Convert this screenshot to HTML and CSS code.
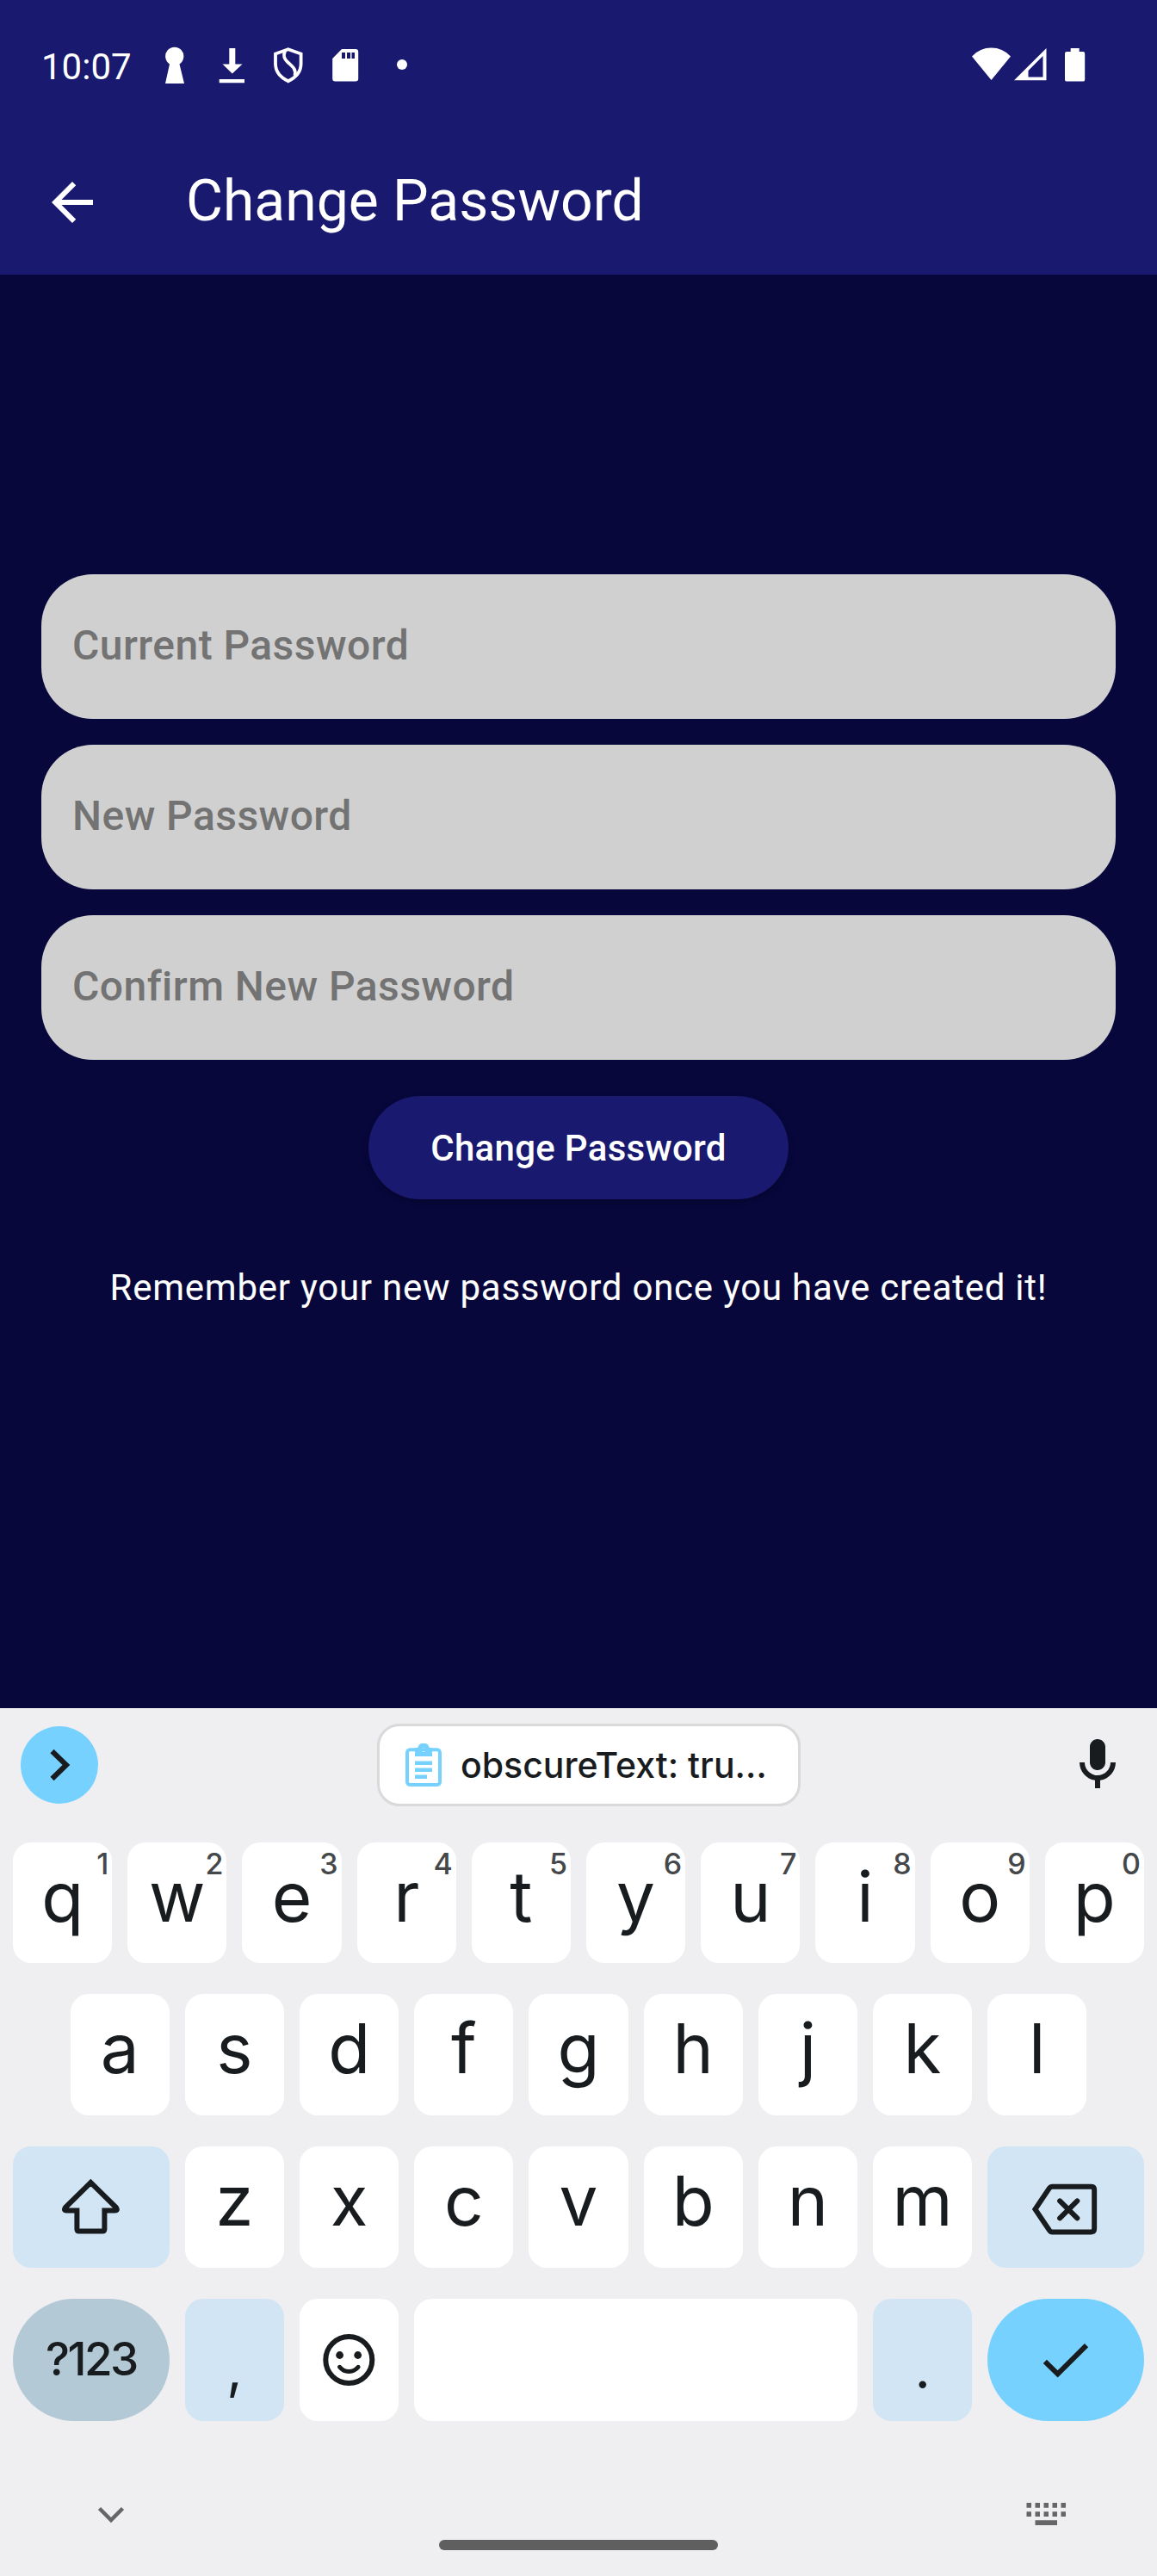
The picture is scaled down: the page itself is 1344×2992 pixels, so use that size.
FILE: index.html
```html
<!DOCTYPE html>
<html lang="en">
<head>
<meta charset="utf-8">
<title>Change Password</title>
<link rel="stylesheet" href="styles.css">
</head>
<body>
<div class="screen">
  <header class="top">
    <div class="status">
      <span class="time">10:07</span>
      <svg class="notifications" width="288" height="48" viewBox="188 51 288 48" fill="#fff">
        <path d="M197 74.500A10.600 10.800 0 1 1 208.500 74.500L214 97H192z"/>
        <path d="M266.300 56h7v18.500h8.200L269.800 85.500 258.500 74.500h7.800zM254.700 92H284v4.200h-29.300z"/>
        <path d="M334.800 57.200L349.600 62.500V74c0 9-6 16-14.800 20.300C326 90 320 83 320 74V62.500z" fill="none" stroke="#fff" stroke-width="3.800"/>
        <path d="M331 59.500c-2.500 6-.5 9.500 3.500 13 5 4.500 10 8 8 15.500" fill="none" stroke="#fff" stroke-width="3.800"/>
        <path fill-rule="evenodd" d="M397 57h16q3.200 0 3.200 3.200v31q0 3.300-3.200 3.300h-23.600q-3.200 0-3.200-3.300V68zM397 61v7h4v-7zM403 61v7h4v-7zM408.500 61v7h3.500v-7z"/>
        <circle cx="467" cy="75" r="6"/>
      </svg>
      <svg class="system" width="134" height="42" viewBox="1128 54 134 42" fill="#fff">
        <path d="M1129 65.500Q1138.500 55.600 1151.500 55.600T1174 65.500L1151.500 93z"/>
        <path fill-rule="evenodd" d="M1178 93.300L1215.500 56V93.300zM1194.500 82V89.500H1211.500V65z"/>
        <path d="M1243.700 56h10v4h4.300q2.200 0 2.200 2.200v30.200q0 2.200-2.200 2.200h-18.800q-2.200 0-2.200-2.200V62.200q0-2.200 2.200-2.200h4.500z"/>
      </svg>
    </div>
    <div class="appbar">
      <svg class="back" width="72" height="72" viewBox="0 0 24 24" fill="#fff"><path d="M20 11H7.830l5.590-5.590L12 4l-8 8 8 8 1.410-1.410L7.830 13H20z"/></svg>
      <h1 class="title">Change Password</h1>
    </div>
  </header>

  <main class="form">
    <div class="field">Current Password</div>
    <div class="field">New Password</div>
    <div class="field">Confirm New Password</div>
    <button class="submit">Change Password</button>
    <p class="note">Remember your new password once you have created it!</p>
  </main>

  <section class="keyboard">
    <div class="suggestions">
      <div class="expand">
        <svg width="90" height="90" viewBox="24 2005 90 90" fill="none" stroke="#191c1e" stroke-width="6"><path d="M60.500 2034L77 2050 60.500 2066"/></svg>
      </div>
      <div class="chip">
        <svg width="42" height="50" viewBox="471 2025 42 50">
          <rect x="473" y="2032.200" width="38" height="40.800" rx="3.500" fill="none" stroke="#77d1ff" stroke-width="4"/>
          <path fill="#77d1ff" fill-rule="evenodd" d="M482 2030h3.200a7 7 0 0 1 13.600 0H502v10h-20zM492 2030a2.500 2.500 0 1 0 .01 5 2.500 2.500 0 0 0-.01-5zM482 2045.500h20v4.500h-20zM482 2053.500h20v4.500h-20zM482 2061.500h14v4.500h-14z"/>
        </svg>
        <span>obscureText: tru…</span>
      </div>
      <svg class="mic" width="72" height="72" viewBox="0 0 24 24" fill="#191c1e"><path d="M12 14c1.660 0 3-1.340 3-3V5c0-1.660-1.340-3-3-3S9 3.340 9 5v6c0 1.660 1.340 3 3 3zM17 11c0 2.760-2.240 5-5 5s-5-2.240-5-5H5c0 3.530 2.610 6.430 6 6.920V21h2v-3.080c3.390-.49 6-3.390 6-6.920z"/></svg>
    </div>

    <div class="keys">
      <div class="row">
        <div class="key">q<sup class="hint">1</sup></div>
        <div class="key">w<sup class="hint">2</sup></div>
        <div class="key">e<sup class="hint">3</sup></div>
        <div class="key">r<sup class="hint">4</sup></div>
        <div class="key">t<sup class="hint">5</sup></div>
        <div class="key">y<sup class="hint">6</sup></div>
        <div class="key">u<sup class="hint">7</sup></div>
        <div class="key">i<sup class="hint">8</sup></div>
        <div class="key">o<sup class="hint">9</sup></div>
        <div class="key">p<sup class="hint">0</sup></div>
      </div>
      <div class="row">
        <div class="key">a</div>
        <div class="key">s</div>
        <div class="key">d</div>
        <div class="key">f</div>
        <div class="key">g</div>
        <div class="key">h</div>
        <div class="key">j</div>
        <div class="key">k</div>
        <div class="key">l</div>
      </div>
      <div class="row">
        <div class="key wide tinted">
          <svg width="181" height="141" viewBox="15 2493 181 141" fill="none" stroke="#191c1e" stroke-width="6"><path d="M105 2535L75.500 2564Q73 2567.500 77 2567.500H89V2589Q89 2591.500 91.500 2591.500H118.500Q121 2591.500 121 2589V2567.500H133Q137 2567.500 134.500 2564z"/></svg>
        </div>
        <div class="key">z</div>
        <div class="key">x</div>
        <div class="key">c</div>
        <div class="key">v</div>
        <div class="key">b</div>
        <div class="key">n</div>
        <div class="key">m</div>
        <div class="key wide tinted">
          <svg width="183" height="141" viewBox="1146 2493 183 141" fill="none" stroke="#191c1e" stroke-width="6"><path d="M1222 2539.500H1267Q1271 2539.500 1271 2543.500V2588.500Q1271 2592.700 1267 2592.700H1222Q1219.500 2592.700 1218 2590L1201.800 2566 1218 2542Q1219.500 2539.500 1222 2539.500z"/><path stroke-linecap="round" d="M1230.700 2556.300L1251 2576.500M1251 2556.300L1230.700 2576.500"/></svg>
        </div>
      </div>
      <div class="row">
        <div class="key wide symbols">?123</div>
        <div class="key tinted punct">,</div>
        <div class="key">
          <svg width="115" height="142" viewBox="347 2670 115 142"><circle cx="404.200" cy="2741" r="27" fill="none" stroke="#191c1e" stroke-width="6"/><circle cx="393.500" cy="2735.500" r="4.400" fill="#191c1e"/><circle cx="414.600" cy="2735.500" r="4.400" fill="#191c1e"/><path d="M393.500 2749.300Q397.500 2754.500 404.200 2754.500T415 2749.300" fill="none" stroke="#191c1e" stroke-width="5" stroke-linecap="round"/></svg>
        </div>
        <div class="key space"></div>
        <div class="key tinted punct">.</div>
        <div class="key wide enter">
          <svg width="183" height="142" viewBox="1146 2670 183 142" fill="none" stroke="#191c1e" stroke-width="6"><path d="M1213.300 2743L1228.200 2757.500 1261.800 2724"/></svg>
        </div>
      </div>
    </div>

    <div class="navbar">
      <svg width="34" height="24" viewBox="112 2909 34 24" fill="none" stroke="#666" stroke-width="4.500"><path d="M115.500 2913.500L129 2927 142.500 2913.500"/></svg>
      <div class="handle"></div>
      <svg width="48" height="28" viewBox="1192 2906 48 28" fill="#666"><path d="M1192.500 2907h5.500v5.800h-5.500zM1202.500 2907h5.500v5.800h-5.500zM1212.500 2907h5.500v5.800h-5.500zM1222.500 2907h5.500v5.800h-5.500zM1232.500 2907h5.500v5.800h-5.500zM1192.500 2917.200h5.500v5.800h-5.500zM1202.500 2917.200h5.500v5.800h-5.500zM1212.500 2917.200h5.500v5.800h-5.500zM1222.500 2917.200h5.500v5.800h-5.500zM1232.500 2917.200h5.500v5.800h-5.500zM1202.500 2927.200h25.500v5.800h-25.500z"/></svg>
    </div>
  </section>
</div>
</body>
</html>
```
FILE: styles.css
```css
* { box-sizing: border-box; }
body { margin: 0; }
svg { display: block; flex: none; }

.screen {
  display: flex;
  flex-direction: column;
  width: 1344px;
  height: 2992px;
  background: #07073c;
  font-family: Roboto, sans-serif;
  color: #fff;
}

/* Status bar and title */
.top { height: 319px; background: #191970; }
.status {
  display: flex;
  align-items: center;
  height: 151px;
  padding: 0 82px 1px 48px;
}
.time { width: 140px; font-size: 42px; line-height: 50px; padding-top: 5px; }
.system { margin-left: auto; }
.appbar {
  display: flex;
  align-items: center;
  height: 168px;
  padding-left: 48px;
  gap: 96px;
}
.title { margin: 0 0 3px; font-size: 66px; font-weight: 400; line-height: 80px; }

/* Form */
.form {
  display: flex;
  flex-direction: column;
  align-items: center;
  height: 1665px;
  padding: 348px 48px 0;
}
.field {
  width: 100%;
  height: 168px;
  margin-bottom: 30px;
  padding-left: 36px;
  border-radius: 60px;
  background: #d0d0d0;
  color: #737373;
  font-size: 48px;
  font-weight: 500;
  line-height: 165px;
  letter-spacing: .45px;
}
.submit {
  width: 488px;
  height: 120px;
  margin: 12px 0 0;
  padding: 0;
  border: 0;
  border-radius: 60px;
  background: #191970;
  box-shadow: 0 3px 6px rgba(0, 0, 0, .25);
  color: #fff;
  font: 500 42px/121px Roboto, sans-serif;
  letter-spacing: .3px;
}
.note { margin: 78px 0 0; font-size: 42px; line-height: 50px; letter-spacing: .75px; white-space: nowrap; }

/* Keyboard */
.keyboard {
  height: 1008px;
  background: #efeff2;
  color: #191c1e;
  font-family: Inter, sans-serif;
}
.suggestions {
  display: flex;
  align-items: center;
  justify-content: space-between;
  height: 132px;
  padding: 0 33px 0 24px;
}
.expand { width: 90px; height: 90px; border-radius: 50%; background: #77d1ff; }
.chip {
  display: flex;
  align-items: center;
  gap: 22px;
  width: 492px;
  height: 96px;
  margin-left: 15px;
  padding-left: 30px;
  border: 3px solid #d9d9da;
  border-radius: 26px;
  background: #fff;
  font-size: 41px;
  font-weight: 500;
  line-height: 90px;
  white-space: nowrap;
}
.keys {
  display: grid;
  grid-template-rows: 140px 141px 141px 142px;
  row-gap: 36px;
  padding: 24px 15px 0;
}
.row { display: flex; justify-content: center; gap: 18px; }
.key {
  position: relative;
  flex: 0 0 115.2px;
  border-radius: 21px;
  background: #fff;
  font-size: 80px;
  line-height: 126px;
  text-align: center;
}
.key svg { width: 100%; }
.hint {
  position: absolute;
  top: 0;
  right: 5px;
  font-size: 34px;
  font-weight: 500;
  line-height: 49px;
  letter-spacing: -1px;
  color: #45484a;
}
.wide { flex-basis: 181.8px; }
.space { flex: 1; }
.tinted { background: #d2e5f4; }
.punct { font-size: 64px; line-height: 161px; }
.symbols {
  border-radius: 71px;
  background: #b4c9d6;
  font-size: 53px;
  font-weight: 500;
  line-height: 140px;
  letter-spacing: -2.5px;
}
.enter { border-radius: 71px; background: #77d1ff; }

.navbar {
  display: flex;
  justify-content: space-between;
  padding: 97px 104px 0 112px;
}
.navbar svg:last-child { margin-top: -3px; }
.handle { width: 324px; height: 12px; margin: 41px 0 0 6px; border-radius: 6px; background: #5f5f5f; }
```
